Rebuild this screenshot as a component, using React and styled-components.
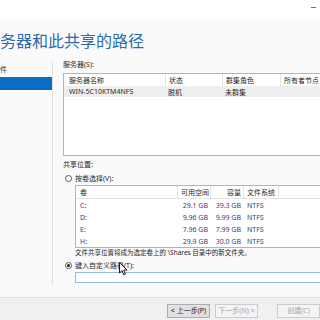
import React from "react";
import styled, { createGlobalStyle } from "styled-components";

const GlobalStyle = createGlobalStyle`
  html, body {
    margin: 0;
    padding: 0;
    background: #fafafa;
    overflow: hidden;
  }
  body {
    font-family: "Noto Sans", "Noto Sans CJK SC", sans-serif;
    font-size: 7px;
    color: #1e1e1e;
  }
`;

const Window = styled.div`
  width: 320px;
  height: 320px;
  display: flex;
  flex-direction: column;
  overflow: hidden;
  position: relative;
`;

const TopStrip = styled.div`
  height: 17px;
  background: #fff;
  display: flex;
  justify-content: flex-end;
  align-items: flex-start;
  padding-right: 4px;
  box-sizing: border-box;
`;

const Minimize = styled.span`
  width: 5px;
  height: 1px;
  margin-top: 7px;
  background: #707070;
`;

const TitleBand = styled.div`
  height: 41px;
  padding-top: 12px;
  box-sizing: border-box;
`;

const Title = styled.h1`
  margin: 0;
  font-family: "Noto Sans CJK SC", sans-serif;
  font-size: 16px;
  font-weight: normal;
  line-height: 22px;
  color: #2a6bad;
  white-space: nowrap;
`;

const Body = styled.div`
  flex: 1;
  display: flex;
  min-height: 0;
`;

const Nav = styled.nav`
  width: 52px;
  flex-shrink: 0;
  margin: 4px 0 12px;
  border-right: 1px solid #dedede;
  display: flex;
  flex-direction: column;
`;

const NavItem = styled.div`
  height: ${(p) => (p.$selected ? 13 : 15)}px;
  line-height: ${(p) => (p.$selected ? 13 : 15)}px;
  background: ${(p) => (p.$selected ? "#0a6cc2" : "transparent")};
  color: ${(p) => (p.$selected ? "#fff" : "#333")};
  white-space: nowrap;
  overflow: hidden;
`;

const Content = styled.div`
  flex: 1;
  min-width: 0;
  padding-left: 10px;
  overflow: hidden;
`;

const Label = styled.div`
  line-height: 12px;
  margin-top: ${(p) => p.$top || 0}px;
  white-space: nowrap;
`;

const ListBox = styled.div`
  width: ${(p) => p.$width}px;
  height: ${(p) => p.$height}px;
  margin-top: ${(p) => p.$top || 0}px;
  margin-left: ${(p) => p.$indent || 0}px;
  border: 1px solid #b4b4b4;
  background: #fff;
  box-sizing: border-box;
`;

const Row = styled.div`
  display: grid;
  grid-template-columns: ${(p) => p.$cols};
  height: ${(p) => p.$h}px;
  align-items: center;
  background: ${(p) => (p.$shade ? "#eeeeee" : "transparent")};
  border-bottom: ${(p) => (p.$line ? "1px solid #e3e3e3" : "none")};
  color: ${(p) => p.$color || "#1e1e1e"};
  white-space: nowrap;
`;

const Cell = styled.div`
  height: 100%;
  display: flex;
  align-items: center;
  justify-content: ${(p) => (p.$right ? "flex-end" : "flex-start")};
  padding: ${(p) => (p.$right ? "0 2px 0 0" : "0 0 0 " + (p.$pad ?? 3) + "px")};
  border-left: ${(p) => (p.$sep ? "1px solid #e3e3e3" : "none")};
  overflow: hidden;
`;

const RadioRow = styled.label`
  display: flex;
  align-items: center;
  gap: 3px;
  height: 12px;
  margin-top: ${(p) => p.$top || 0}px;
  padding-left: 2px;
  white-space: nowrap;
  position: relative;
`;

const Radio = styled.span`
  width: 7px;
  height: 7px;
  border-radius: 50%;
  border: 1px solid #5a5a5a;
  background: #fff;
  box-sizing: border-box;
  display: flex;
  align-items: center;
  justify-content: center;

  &::after {
    content: "";
    width: 3px;
    height: 3px;
    border-radius: 50%;
    background: ${(p) => (p.$checked ? "#1e1e1e" : "transparent")};
  }
`;

const Note = styled.div`
  font-size: 6.5px;
  line-height: 10px;
  margin-left: 12px;
  white-space: nowrap;
`;

const PathInput = styled.input`
  display: block;
  width: 260px;
  height: 11px;
  margin: 1px 0 0 12px;
  padding: 0;
  border: 1px solid #93bde6;
  background: #fff;
  box-sizing: border-box;
  outline: none;
`;

const Cursor = styled.svg`
  position: absolute;
  left: 56px;
  top: 3px;
`;

const Footer = styled.div`
  height: 23px;
  border-top: 1px solid #dfdfdf;
  background: #f0f0f0;
  box-sizing: border-box;
  display: flex;
  justify-content: flex-end;
  align-items: flex-start;
  padding-top: 6px;
  gap: 5px;
`;

const Button = styled.button`
  width: 43px;
  height: 14px;
  margin: 0 0 0 ${(p) => p.$gap || 0}px;
  padding: 0;
  font-family: inherit;
  font-size: 7px;
  line-height: 12px;
  border: 1px solid ${(p) => (p.disabled ? "#cccccc" : "#adadad")};
  background: ${(p) => (p.disabled ? "#f4f4f4" : "#e1e1e1")};
  color: ${(p) => (p.disabled ? "#a6a6a6" : "#1e1e1e")};
  white-space: nowrap;
`;

const serverCols = "101px 57px 58px 80px";
const volumeCols = "101px 33px 33px 35px 60px";

const volumes = [
  { name: "C:", free: "29.1 GB", cap: "39.3 GB", fs: "NTFS" },
  { name: "D:", free: "9.96 GB", cap: "9.99 GB", fs: "NTFS" },
  { name: "E:", free: "7.96 GB", cap: "7.99 GB", fs: "NTFS" },
  { name: "H:", free: "29.9 GB", cap: "30.0 GB", fs: "NTFS" },
];

export default function App() {
  return (
    <>
      <GlobalStyle />
      <Window>
        <TopStrip>
          <Minimize />
        </TopStrip>
        <TitleBand>
          <Title>务器和此共享的路径</Title>
        </TitleBand>
        <Body>
          <Nav>
            <NavItem>件</NavItem>
            <NavItem $selected />
          </Nav>
          <Content>
            <Label $top={1}>服务器(S):</Label>
            <ListBox $width={300} $height={83} $top={2}>
              <Row $cols={serverCols} $h={12}>
                <Cell $pad={5}>服务器名称</Cell>
                <Cell $sep>状态</Cell>
                <Cell $sep>群集角色</Cell>
                <Cell $sep>所有者节点</Cell>
              </Row>
              <Row $cols={serverCols} $h={11} $shade $color="#2a2a2a">
                <Cell $pad={5}>WIN-5C10KTM4NFS</Cell>
                <Cell>脱机</Cell>
                <Cell>未群集</Cell>
                <Cell />
              </Row>
            </ListBox>

            <Label $top={3}>共享位置:</Label>
            <RadioRow $top={1}>
              <Radio />
              按卷选择(V):
            </RadioRow>
            <ListBox $width={270} $height={63} $top={1} $indent={12}>
              <Row $cols={volumeCols} $h={12} $line>
                <Cell $pad={4}>卷</Cell>
                <Cell $sep>可用空间</Cell>
                <Cell $sep $right>容量</Cell>
                <Cell $sep>文件系统</Cell>
                <Cell $sep />
              </Row>
              {volumes.map((v) => (
                <Row key={v.name} $cols={volumeCols} $h={12} $color="#2f3f86">
                  <Cell $pad={4}>{v.name}</Cell>
                  <Cell $right>{v.free}</Cell>
                  <Cell $right>{v.cap}</Cell>
                  <Cell $pad={4}>{v.fs}</Cell>
                  <Cell />
                </Row>
              ))}
            </ListBox>
            <Note>文件共享位置将成为选定卷上的 \Shares 目录中的新文件夹。</Note>
            <RadioRow $top={1}>
              <Radio $checked />
              键入自定义路径(T):
              <Cursor width="9" height="14" viewBox="0 0 9 14">
                <path
                  d="M0.5 0.5 L0.5 11 L3 8.6 L4.8 12.8 L6.4 12.1 L4.7 8.1 L8 8.1 Z"
                  fill="#fff"
                  stroke="#1a1a1a"
                  strokeWidth="1"
                  strokeLinejoin="round"
                />
              </Cursor>
            </RadioRow>
            <PathInput />
          </Content>
        </Body>
        <Footer>
          <Button>&lt; 上一步(P)</Button>
          <Button disabled>下一步(N) &gt;</Button>
          <Button disabled $gap={14}>创建(C)</Button>
        </Footer>
      </Window>
    </>
  );
}
